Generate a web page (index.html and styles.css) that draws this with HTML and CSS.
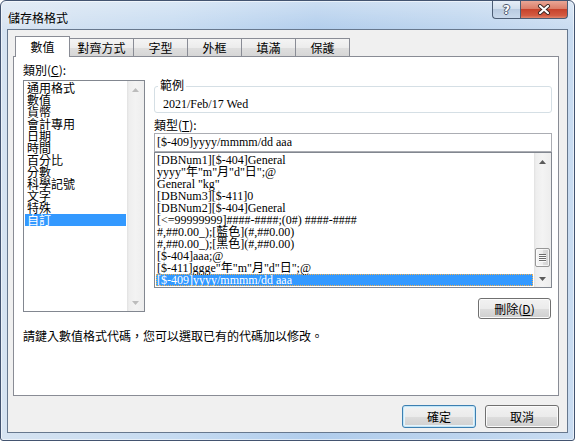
FILE: index.html
```html
<!DOCTYPE html>
<html lang="zh-Hant">
<head>
  <meta charset="UTF-8">
  <meta name="viewport" content="width=device-width, initial-scale=1.0">
  <title>儲存格格式</title>
  <link rel="stylesheet" href="styles.css">
</head>
<body>
  <div class="window">
    <div class="titlebar">
      <span class="title">儲存格格式</span>
      <div class="caption-buttons">
        <span class="caption-btn help"><span class="help-mark">?</span></span>
        <span class="caption-btn close">
          <svg width="14" height="11" viewBox="0 0 14 11">
            <path d="M3 2 L11 9 M11 2 L3 9" stroke="#3a2622" stroke-width="4" stroke-linecap="round" fill="none"/>
            <path d="M3 2 L11 9 M11 2 L3 9" stroke="#fff" stroke-width="2.2" stroke-linecap="round" fill="none"/>
          </svg>
        </span>
      </div>
    </div>

    <div class="client">
      <div class="tabs">
        <div class="tab active">數值</div>
        <div class="tab">對齊方式</div>
        <div class="tab">字型</div>
        <div class="tab">外框</div>
        <div class="tab">填滿</div>
        <div class="tab">保護</div>
      </div>

      <div class="panel">
        <div class="panel-body">
          <!-- 左欄：類別清單 -->
          <div class="col">
            <div class="label">類別(<u>C</u>):</div>
            <div class="listbox category">
              <ul class="items">
                <li>通用格式</li>
                <li>數值</li>
                <li>貨幣</li>
                <li>會計專用</li>
                <li>日期</li>
                <li>時間</li>
                <li>百分比</li>
                <li>分數</li>
                <li>科學記號</li>
                <li>文字</li>
                <li>特殊</li>
                <li class="selected">自訂</li>
              </ul>
              <div class="vscroll disabled">
                <span class="arrow"><svg width="7" height="4" viewBox="0 0 7 4"><path d="M0 4 L3.5 0 L7 4Z"/></svg></span>
                <span class="track"></span>
                <span class="arrow"><svg width="7" height="4" viewBox="0 0 7 4"><path d="M0 0 L3.5 4 L7 0Z"/></svg></span>
              </div>
            </div>
          </div>

          <!-- 右欄：範例、類型與格式代碼 -->
          <div class="col">
            <div class="group">
              <div class="group-title">範例</div>
              <div class="sample">2021/Feb/17 Wed</div>
            </div>
            <div class="label type-label">類型(<u>T</u>):</div>
            <div class="textbox">[$-409]yyyy/mmmm/dd aaa</div>
            <div class="listbox formats">
              <ul class="items">
                <li>[DBNum1][$-404]General</li>
                <li>yyyy"年"m"月"d"日";@</li>
                <li>General "kg"</li>
                <li>[DBNum3][$-411]0</li>
                <li>[DBNum2][$-404]General</li>
                <li>[&lt;=99999999]####-####;(0#) ####-####</li>
                <li>#,##0.00_);[藍色](#,##0.00)</li>
                <li>#,##0.00_);[黑色](#,##0.00)</li>
                <li>[$-404]aaa;@</li>
                <li>[$-411]ggge"年"m"月"d"日";@</li>
                <li class="selected focused">[$-409]yyyy/mmmm/dd aaa</li>
              </ul>
              <div class="vscroll">
                <span class="arrow"><svg width="7" height="4" viewBox="0 0 7 4"><path d="M0 4 L3.5 0 L7 4Z"/></svg></span>
                <span class="track"><span class="thumb"><span class="grip"></span></span></span>
                <span class="arrow"><svg width="7" height="4" viewBox="0 0 7 4"><path d="M0 0 L3.5 4 L7 0Z"/></svg></span>
              </div>
            </div>
            <button class="btn delete">刪除(<u>D</u>)</button>
          </div>
        </div>

        <p class="hint">請鍵入數值格式代碼，您可以選取已有的代碼加以修改。</p>
      </div>

      <div class="footer">
        <button class="btn default">確定</button>
        <button class="btn">取消</button>
      </div>
    </div>
  </div>
</body>
</html>
```

FILE: styles.css
```css
body {
  margin: 0;
  font-family: "Noto Sans CJK TC", sans-serif;
  font-size: 12px;
  color: #000;
  background: #fff;
}
.window {
  width: 575px;
  height: 441px;
  box-sizing: border-box;
  display: flex;
  flex-direction: column;
  padding: 0 6px 7px;
  border: 1px solid #435470;
  border-radius: 6px 6px 3px 3px;
  background:
    linear-gradient(180deg, rgba(255, 255, 255, 0.35) 0, rgba(255, 255, 255, 0) 30px),
    linear-gradient(90deg, #d6e3f1 0%, #c6dbf1 30%, #b1cdec 55%, #bcd4ee 80%, #c9dcf1 100%);
  box-shadow: inset 0 0 0 1px rgba(255, 255, 255, 0.55);
}

/* 標題列 */
.titlebar {
  height: 28px;
  display: flex;
  justify-content: space-between;
  align-items: flex-start;
}
.title {
  margin: 10px 0 0 1px;
  line-height: 14px;
  text-shadow: 0 0 6px rgba(255, 255, 255, 0.9);
}
.caption-buttons {
  display: flex;
}
.caption-btn {
  box-sizing: border-box;
  height: 18px;
  display: flex;
  align-items: center;
  justify-content: center;
  border: 1px solid #4c5d74;
  border-top: none;
}
.help {
  width: 28px;
  border-right: none;
  border-radius: 0 0 0 4px;
  background: linear-gradient(180deg, #e6eef7 0%, #d2dfed 45%, #b9cbe0 50%, #c9d9ec 100%);
}
.help-mark {
  font: bold 12px "DejaVu Sans", sans-serif;
  line-height: 12px;
  color: #fff;
  text-shadow: 1px 0 0 #4a586d, -1px 0 0 #4a586d, 0 1px 0 #4a586d, 0 -1px 0 #4a586d;
}
.close {
  width: 48px;
  border-radius: 0 0 4px 0;
  background: linear-gradient(180deg, #e9a696 0%, #dc7e69 45%, #c7432c 50%, #d35a41 85%, #e0866d 100%);
}
.close svg {
  display: block;
}

/* 對話方塊內容區 */
.client {
  flex: 1;
  display: flex;
  flex-direction: column;
  padding: 6px 8px 0 5px;
  border: 1px solid #67788e;
  background: #f0f0f0;
}
.tabs {
  height: 20px;
  display: flex;
  align-items: flex-end;
  padding-left: 2px;
}
.tab {
  box-sizing: border-box;
  min-width: 55px;
  height: 18px;
  padding: 0 7.5px;
  margin-left: -1px;
  display: flex;
  align-items: center;
  justify-content: center;
  line-height: 12px;
  border: 1px solid #898c95;
  border-bottom: none;
  background: linear-gradient(180deg, #f4f4f4 0%, #ececec 50%, #dedede 55%, #d6d6d6 100%);
}
.tab:first-child {
  margin-left: 0;
}
.tab.active {
  position: relative;
  z-index: 1;
  height: 21px;
  margin-bottom: -1px;
  padding-bottom: 1px;
  background: #fff;
}
.panel {
  box-sizing: border-box;
  height: 340px;
  padding: 6px 6px 0 9px;
  border: 1px solid #898c95;
  background: #fff;
}
.panel-body {
  display: grid;
  grid-template-columns: 122px 398px;
  column-gap: 9px;
  align-items: start;
}
.col {
  display: flex;
  flex-direction: column;
}
.label {
  line-height: 14px;
  margin-bottom: 3px;
}
.type-label {
  margin: 5px 0 1px;
}

/* 清單方塊 */
.listbox {
  box-sizing: border-box;
  display: flex;
  border: 1px solid #828790;
  background: #fff;
}
.listbox.category {
  height: 232px;
}
.listbox.formats {
  height: 136px;
}
.items {
  flex: 1;
  margin: 0;
  padding: 1px;
  list-style: none;
}
.items li {
  height: 12px;
  line-height: 12px;
  padding-left: 2px;
  white-space: nowrap;
}
.formats .items li {
  padding-left: 1px;
  font-family: "Liberation Serif", "Noto Sans CJK TC", serif;
}
.items li.selected {
  background: #3399ff;
  color: #fff;
}
.items li.focused {
  outline: 1px dotted #f6b04c;
  outline-offset: -1px;
}

/* 捲軸 */
.vscroll {
  width: 17px;
  display: flex;
  flex-direction: column;
  background: linear-gradient(90deg, #e1e1e1 0, #eeeeee 2px, #f3f3f3 50%, #ededed 100%);
}
.vscroll .arrow {
  height: 17px;
  display: flex;
  align-items: center;
  justify-content: center;
}
.vscroll .arrow svg {
  display: block;
  fill: #5b5b5b;
}
.vscroll.disabled .arrow svg {
  fill: #bcbcbc;
}
.track {
  flex: 1;
  display: flex;
  flex-direction: column;
  justify-content: flex-end;
}
.thumb {
  height: 19px;
  margin: 0 1px 3px;
  display: flex;
  align-items: center;
  justify-content: center;
  border: 1px solid #979797;
  border-radius: 2px;
  box-sizing: border-box;
  background: linear-gradient(90deg, #f6f6f6 0%, #ececec 50%, #dcdcdc 55%, #d2d2d2 100%);
  box-shadow: inset 0 0 0 1px rgba(255, 255, 255, 0.7);
}
.grip {
  width: 7px;
  height: 8px;
  background: repeating-linear-gradient(180deg, #6c6c6c 0 1px, #fbfbfb 1px 2px);
}

/* 範例群組 */
.group {
  margin-top: 23px;
  padding: 0 8px 1px;
  border: 1px solid #d5dfe5;
  border-radius: 3px;
}
.group-title {
  width: fit-content;
  margin: -9px 0 0 -5px;
  padding: 0 2px;
  line-height: 14px;
  background: #fff;
}
.sample {
  margin-top: 5px;
  line-height: 14px;
  font-family: "Liberation Serif", "Noto Sans CJK TC", serif;
}
.textbox {
  box-sizing: border-box;
  height: 19px;
  padding: 0 2px;
  line-height: 17px;
  border: 1px solid #abadb3;
  font-family: "Liberation Serif", "Noto Sans CJK TC", serif;
}

/* 按鈕 */
.btn {
  box-sizing: border-box;
  width: 74px;
  height: 23px;
  padding: 0;
  font-family: "Noto Sans CJK TC", sans-serif;
  font-size: 12px;
  line-height: 12px;
  color: #000;
  border: 1px solid #707070;
  border-radius: 3px;
  background: linear-gradient(180deg, #f2f2f2 0%, #ebebeb 50%, #dddddd 51%, #cfcfcf 100%);
  box-shadow: inset 0 0 0 1px #fbfbfb;
}
.btn.delete {
  align-self: flex-end;
  width: 73px;
  height: 21px;
  margin: 10px 1px 0 0;
}
.btn.default {
  border-color: #3c7fb1;
  box-shadow: inset 0 0 0 1px #c4e5f6, inset 0 0 0 2px #e6f4fb;
}
.hint {
  margin: 10px 0 0;
  line-height: 14px;
}
.footer {
  display: flex;
  justify-content: flex-end;
  gap: 9px;
  margin-top: 9px;
}
```
